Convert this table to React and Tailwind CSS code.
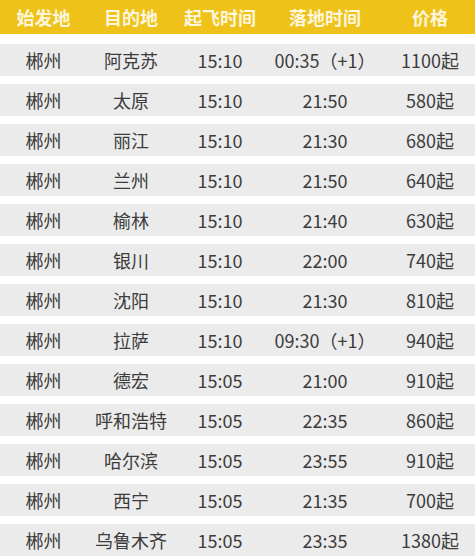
import React from "react";

const rows = [
  ["郴州", "阿克苏", "15:10", "00:35（+1）", "1100起"],
  ["郴州", "太原", "15:10", "21:50", "580起"],
  ["郴州", "丽江", "15:10", "21:30", "680起"],
  ["郴州", "兰州", "15:10", "21:50", "640起"],
  ["郴州", "榆林", "15:10", "21:40", "630起"],
  ["郴州", "银川", "15:10", "22:00", "740起"],
  ["郴州", "沈阳", "15:10", "21:30", "810起"],
  ["郴州", "拉萨", "15:10", "09:30（+1）", "940起"],
  ["郴州", "德宏", "15:05", "21:00", "910起"],
  ["郴州", "呼和浩特", "15:05", "22:35", "860起"],
  ["郴州", "哈尔滨", "15:05", "23:55", "910起"],
  ["郴州", "西宁", "15:05", "21:35", "700起"],
  ["郴州", "乌鲁木齐", "15:05", "23:35", "1380起"],
];

const cols = "grid grid-cols-[87px_88px_90px_120px_90px]";

export default function App() {
  return (
    <div
      className="w-[475px] h-[558px] bg-white overflow-hidden"
      style={{ fontFamily: '"Noto Sans CJK SC", "Noto Sans", sans-serif' }}
    >
      <div className={`${cols} h-[34px] bg-[#efc21a] items-center text-[18px] font-bold text-[#fdf6dc]`}>
        {["始发地", "目的地", "起飞时间", "落地时间", "价格"].map((h) => (
          <div key={h} className="text-center leading-none">{h}</div>
        ))}
      </div>
      <div className="flex flex-col gap-[8px] pt-[10px]">
        {rows.map((r, i) => (
          <div
            key={i}
            className={`${cols} h-[32px] bg-[#ebebeb] items-center text-[18px] text-[#3c3c3c]`}
          >
            {r.map((c, j) => (
              <div key={j} className="text-center leading-none whitespace-nowrap">{c}</div>
            ))}
          </div>
        ))}
      </div>
    </div>
  );
}
